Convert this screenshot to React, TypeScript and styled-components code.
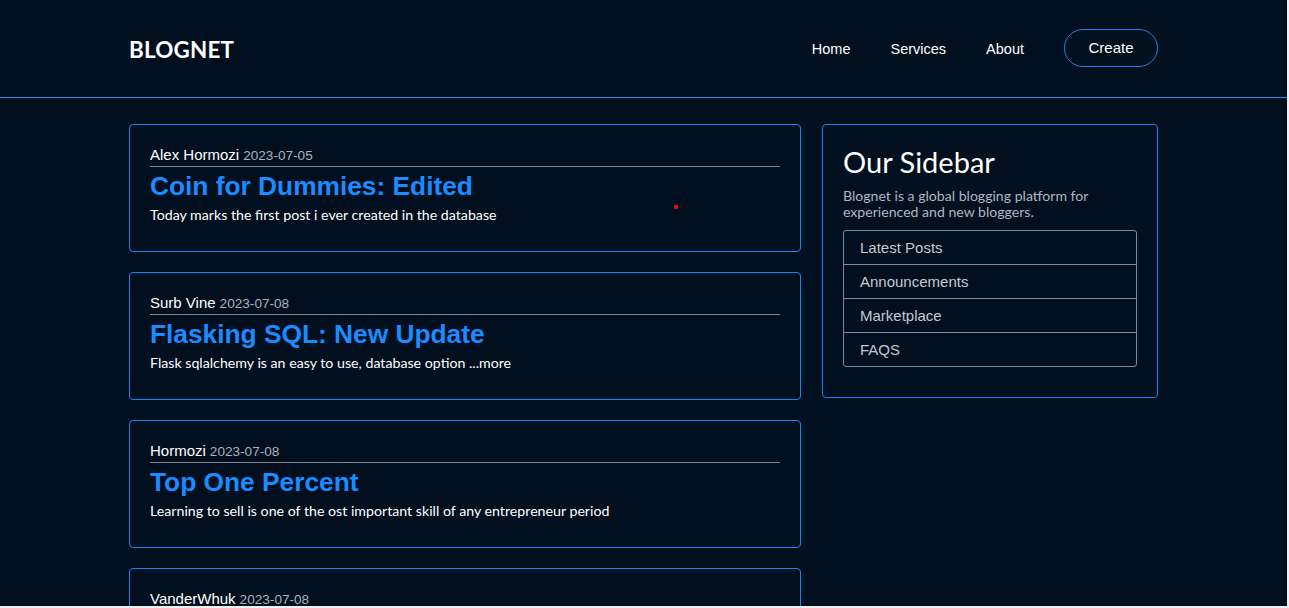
import React from "react";
import styled, { createGlobalStyle } from "styled-components";

const Global = createGlobalStyle`
  html, body { margin: 0; padding: 0; background: #f0f0f0; }
  body { font-family: "Trebuchet MS", Lato, "DejaVu Sans", sans-serif; }
  * { box-sizing: border-box; }
`;

const Page = styled.div`
  width: 1287px;
  height: 606px;
  overflow: hidden;
  background: #010f1f;
  color: #ffffff;
  position: relative;
`;

const Header = styled.header`
  height: 98px;
  border-bottom: 1px solid #3a8ee0;
`;

const Container = styled.div`
  width: 1029px;
  margin: 0 auto;
`;

const HeaderInner = styled(Container)`
  height: 97px;
  display: flex;
  align-items: center;
  justify-content: space-between;
`;

const Logo = styled.div`
  font-family: "Trebuchet MS", Lato, sans-serif;
  font-weight: 700;
  font-size: 22.4px;
  letter-spacing: 0.2px;
  padding-top: 1px;
`;

const Nav = styled.nav`
  display: flex;
  align-items: center;
  gap: 40px;
  font-family: Arial, "Liberation Sans", sans-serif;
  font-size: 14.5px;
`;

const NavLink = styled.a`
  color: #ffffff;
  text-decoration: none;
`;

const CreateButton = styled.button`
  height: 38px;
  width: 94px;
  border: 1px solid #1a84f0;
  border-radius: 19px;
  background: transparent;
  color: #ffffff;
  font-family: Arial, "Liberation Sans", sans-serif;
  font-size: 15px;
  padding: 0 0 2px;
  margin-top: -1px;
`;

const Main = styled(Container)`
  display: flex;
  gap: 21px;
  align-items: flex-start;
  padding-top: 26px;
`;

const Feed = styled.div`
  width: 672px;
  display: flex;
  flex-direction: column;
  gap: 20px;
`;

const Card = styled.article`
  position: relative;
  border: 1px solid #1a84f0;
  border-radius: 4px;
  padding: 21px 20px 20px;
`;

const Meta = styled.div`
  font-family: Arial, "Liberation Sans", sans-serif;
  line-height: 17px;
  padding-bottom: 2px;
  border-bottom: 1px solid #7d8792;
`;

const Author = styled.span`
  font-size: 15px;
  color: #ffffff;
`;

const DateText = styled.span`
  font-size: 13.6px;
  color: #a9b1ba;
  margin-left: 4px;
`;

const Title = styled.h2`
  margin: 4px 0 6px;
  font-family: Arial, "Liberation Sans", sans-serif;
  font-weight: 700;
  font-size: 26.3px;
  line-height: 30px;
  color: #1a8cff;
`;

const Body = styled.p`
  margin: 0 0 8px;
  font-size: 14.2px;
  line-height: 16px;
  color: #ffffff;
`;

const Dot = styled.span`
  position: absolute;
  left: 544px;
  top: 80px;
  width: 4px;
  height: 4px;
  background: #e01010;
  border-radius: 1px;
`;

const Sidebar = styled.aside`
  width: 336px;
  border: 1px solid #1a84f0;
  border-radius: 4px;
  padding: 20px 20px 30px;
`;

const SideTitle = styled.h3`
  margin: 0 0 9px;
  font-weight: 400;
  font-size: 29px;
  line-height: 34px;
  color: #ffffff;
`;

const SideText = styled.p`
  margin: 0 0 10px;
  font-size: 14.1px;
  line-height: 16px;
  color: #aeb6c0;
`;

const List = styled.ul`
  list-style: none;
  margin: 0;
  padding: 0;
  border: 1px solid #7f8a96;
  border-radius: 3px;
`;

const Item = styled.li`
  font-family: Arial, "Liberation Sans", sans-serif;
  font-size: 15px;
  line-height: 17px;
  padding: 8px 16px;
  color: #c2cad2;
  & + & { border-top: 1px solid #7f8a96; }
`;

const posts = [
  { author: "Alex Hormozi", date: "2023-07-05", title: "Coin for Dummies: Edited", body: "Today marks the first post i ever created in the database", dot: true },
  { author: "Surb Vine", date: "2023-07-08", title: "Flasking SQL: New Update", body: "Flask sqlalchemy is an easy to use, database option ...more" },
  { author: "Hormozi", date: "2023-07-08", title: "Top One Percent", body: "Learning to sell is one of the ost important skill of any entrepreneur period" },
  { author: "VanderWhuk", date: "2023-07-08", title: "Building Blocks", body: "Every great product starts with a single idea" },
];

export default function App() {
  return (
    <Page>
      <Global />
      <Header>
        <HeaderInner>
          <Logo>BLOGNET</Logo>
          <Nav>
            <NavLink href="#">Home</NavLink>
            <NavLink href="#">Services</NavLink>
            <NavLink href="#">About</NavLink>
            <CreateButton>Create</CreateButton>
          </Nav>
        </HeaderInner>
      </Header>
      <Main>
        <Feed>
          {posts.map((p) => (
            <Card key={p.title}>
              <Meta>
                <Author>{p.author}</Author>
                <DateText>{p.date}</DateText>
              </Meta>
              <Title>{p.title}</Title>
              <Body>{p.body}</Body>
              {p.dot && <Dot />}
            </Card>
          ))}
        </Feed>
        <Sidebar>
          <SideTitle>Our Sidebar</SideTitle>
          <SideText>Blognet is a global blogging platform for experienced and new bloggers.</SideText>
          <List>
            <Item>Latest Posts</Item>
            <Item>Announcements</Item>
            <Item>Marketplace</Item>
            <Item>FAQS</Item>
          </List>
        </Sidebar>
      </Main>
    </Page>
  );
}
